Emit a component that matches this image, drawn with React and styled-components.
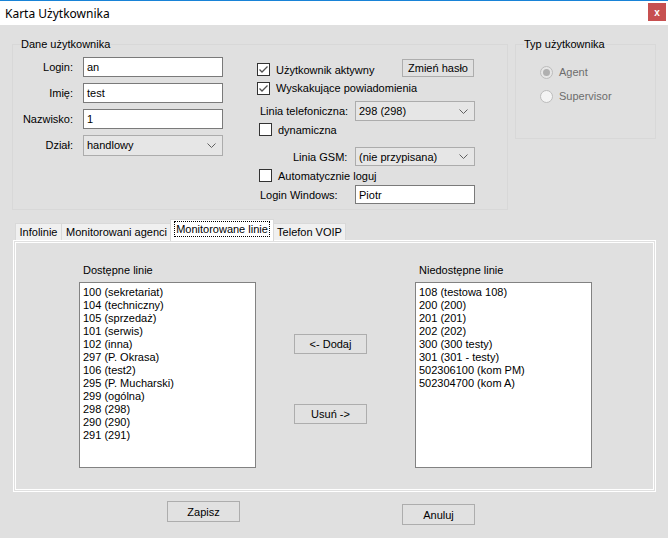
import React from "react";
import styled, { createGlobalStyle } from "styled-components";

const Global = createGlobalStyle`
  html, body {
    margin: 0;
    padding: 0;
    background: #e0e0e0;
  }
  * {
    box-sizing: border-box;
  }
`;

const Window = styled.div`
  width: 668px;
  height: 538px;
  background: #e0e0e0;
  display: flex;
  flex-direction: column;
  font-family: "Liberation Sans", Arial, sans-serif;
  font-size: 11px;
  color: #000;
  overflow: hidden;
`;

const TitleBar = styled.div`
  height: 25px;
  border-top: 1px solid #1883d7;
  background: #fff;
  display: flex;
  align-items: center;
  justify-content: space-between;
  padding-left: 5px;
  font-family: "Noto Sans", "Open Sans", sans-serif;
  font-size: 12px;
`;

const CloseBtn = styled.div`
  width: 18px;
  height: 18px;
  margin-right: 2px;
  align-self: flex-start;
  margin-top: 2px;
  background: #c75050;
  color: #fff;
  font-family: "Liberation Sans", Arial, sans-serif;
  font-weight: bold;
  font-size: 10px;
  display: flex;
  align-items: center;
  justify-content: center;
`;

const Body = styled.div`
  padding: 19px 0 0 12px;
  display: flex;
  flex-direction: column;
`;

const TopRow = styled.div`
  display: flex;
  align-items: flex-start;
  gap: 7px;
`;

const Group = styled.div`
  width: ${(p) => p.$w}px;
  height: ${(p) => p.$h}px;
  border: 1px solid #d8d8d8;
  display: flex;
  flex-direction: column;
`;

const Legend = styled.div`
  margin: -7px 0 0 8px;
  padding: 0 1px 0 0;
  background: #e0e0e0;
  line-height: 13px;
  width: fit-content;
`;

const GroupBody = styled.div`
  display: flex;
  padding-top: 6px;
`;

const LeftCol = styled.div`
  width: 210px;
  display: flex;
  flex-direction: column;
  gap: 6px;
`;

const FieldRow = styled.div`
  display: flex;
  align-items: center;
  gap: 10px;
  height: 20px;
`;

const FieldLabel = styled.span`
  width: 60px;
  text-align: right;
`;

const TextInput = styled.div`
  width: ${(p) => p.$w}px;
  height: ${(p) => p.$h || 20}px;
  background: #fff;
  border: 1px solid #7a7a7a;
  padding-left: 3px;
  display: flex;
  align-items: center;
`;

const Combo = styled.div`
  width: ${(p) => p.$w}px;
  height: ${(p) => p.$h || 20}px;
  background: #e6e6e6;
  border: 1px solid #acacac;
  padding: 0 6px 0 3px;
  display: flex;
  align-items: center;
  justify-content: space-between;
`;

const MidCol = styled.div`
  width: 218px;
  margin-left: 34px;
  margin-top: 1px;
  display: flex;
  flex-direction: column;
`;

const MidRow = styled.div`
  height: ${(p) => p.$h}px;
  margin-top: ${(p) => p.$mt || 0}px;
  display: flex;
  align-items: center;
  justify-content: space-between;
`;

const CheckLabel = styled.label`
  display: flex;
  align-items: center;
  gap: 6px;
  margin-left: ${(p) => p.$indent || 0}px;
  margin-top: ${(p) => p.$mt || 0}px;
`;

const Box = styled.span`
  width: 13px;
  height: 13px;
  border: 1px solid #333;
  background: #fff;
  display: flex;
  align-items: center;
  justify-content: center;
`;

const SideLabel = styled.span`
  width: 98px;
  padding-left: ${(p) => p.$indent}px;
  white-space: nowrap;
`;

const PlainRow = styled.div`
  display: flex;
  align-items: center;
`;

const Button = styled.div`
  width: ${(p) => p.$w}px;
  height: ${(p) => p.$h}px;
  margin: ${(p) => p.$m || "0"};
  background: #e1e1e1;
  border: 1px solid #adadad;
  display: flex;
  align-items: center;
  justify-content: center;
`;

const RadioList = styled.div`
  padding: 9px 0 0 24px;
  display: flex;
  flex-direction: column;
`;

const RadioRow = styled.div`
  height: 24px;
  display: flex;
  align-items: center;
  gap: 6px;
  color: #6d6d6d;
`;

const RadioCircle = styled.span`
  width: 13px;
  height: 13px;
  border-radius: 50%;
  border: 1px solid #bcbcbc;
  background: ${(p) => (p.$on ? "#e6e6e6" : "#f4f4f4")};
  display: flex;
  align-items: center;
  justify-content: center;
  &::after {
    content: "";
    width: 7px;
    height: 7px;
    border-radius: 50%;
    background: ${(p) => (p.$on ? "#b0b0b0" : "transparent")};
  }
`;

const TabStrip = styled.div`
  margin-top: 9px;
  height: 21px;
  padding-left: 3px;
  display: flex;
  align-items: flex-end;
`;

const Tab = styled.div`
  width: ${(p) => p.$w}px;
  height: ${(p) => (p.$active ? 22 : 17)}px;
  margin-right: -1px;
  margin-bottom: ${(p) => (p.$active ? -1 : 0)}px;
  margin-left: ${(p) => (p.$active ? -1 : 0)}px;
  background: ${(p) => (p.$active ? "#fff" : "#f0f0f0")};
  border: 1px solid #d9d9d9;
  border-bottom: none;
  display: flex;
  align-items: center;
  justify-content: center;
  padding-bottom: ${(p) => (p.$active ? 3 : 0)}px;
  position: relative;
  z-index: ${(p) => (p.$active ? 2 : 1)};
`;

const FocusText = styled.span`
  padding: 1px 1px;
  outline: 1px dotted #000;
`;

const Panel = styled.div`
  width: 643px;
  height: 252px;
  margin-left: 1px;
  border: 3px double #fff;
  background: #e0e0e0;
  display: flex;
  align-items: flex-start;
  padding: 21px 0 0 63px;
`;

const ListCol = styled.div`
  display: flex;
  flex-direction: column;
  margin-left: ${(p) => p.$ml || 0}px;
`;

const ListTitle = styled.div`
  line-height: 13px;
  padding-left: 4px;
  margin-bottom: 5px;
`;

const ListBox = styled.div`
  width: 177px;
  height: 186px;
  background: #fff;
  border: 1px solid #828282;
  padding: 3px 3px;
  line-height: 13px;
`;

const MoveCol = styled.div`
  margin: 70px 0 0 38px;
  display: flex;
  flex-direction: column;
  gap: 50px;
`;

const BottomRow = styled.div`
  display: flex;
  align-items: flex-start;
  margin-top: 9px;
`;

const Chevron = () => (
  <svg width="9" height="5" viewBox="0 0 9 5">
    <polyline points="0.5,0.5 4.5,4.5 8.5,0.5" fill="none" stroke="#606060" strokeWidth="1" />
  </svg>
);

const Check = ({ checked, label, indent, mt }) => (
  <CheckLabel $indent={indent} $mt={mt}>
    <Box>
      {checked && (
        <svg width="11" height="11" viewBox="0 0 11 11">
          <polyline points="1.5,5.5 4,8 9.5,2.5" fill="none" stroke="#505050" strokeWidth="1.3" />
        </svg>
      )}
    </Box>
    <span>{label}</span>
  </CheckLabel>
);

const available = [
  "100 (sekretariat)",
  "104 (techniczny)",
  "105 (sprzedaż)",
  "101 (serwis)",
  "102 (inna)",
  "297 (P. Okrasa)",
  "106 (test2)",
  "295 (P. Mucharski)",
  "299 (ogólna)",
  "298 (298)",
  "290 (290)",
  "291 (291)",
];

const unavailable = [
  "108 (testowa 108)",
  "200 (200)",
  "201 (201)",
  "202 (202)",
  "300 (300 testy)",
  "301 (301 - testy)",
  "502306100 (kom PM)",
  "502304700 (kom A)",
];

export default function App() {
  return (
    <>
      <Global />
      <Window>
        <TitleBar>
          <span>Karta Użytkownika</span>
          <CloseBtn>x</CloseBtn>
        </TitleBar>
        <Body>
          <TopRow>
            <Group $w={496} $h={166}>
              <Legend>Dane użytkownika</Legend>
              <GroupBody>
                <LeftCol>
                  <FieldRow>
                    <FieldLabel>Login:</FieldLabel>
                    <TextInput $w={140}>an</TextInput>
                  </FieldRow>
                  <FieldRow>
                    <FieldLabel>Imię:</FieldLabel>
                    <TextInput $w={140}>test</TextInput>
                  </FieldRow>
                  <FieldRow>
                    <FieldLabel>Nazwisko:</FieldLabel>
                    <TextInput $w={140}>1</TextInput>
                  </FieldRow>
                  <FieldRow>
                    <FieldLabel>Dział:</FieldLabel>
                    <Combo $w={140} $h={21}>
                      <span>handlowy</span>
                      <Chevron />
                    </Combo>
                  </FieldRow>
                </LeftCol>
                <MidCol>
                  <MidRow $h={20}>
                    <Check checked label="Użytkownik aktywny" mt={3} />
                    <Button $w={72} $h={18} $m="0 1px 0 0">
                      Zmień hasło
                    </Button>
                  </MidRow>
                  <MidRow $h={20}>
                    <Check checked label="Wyskakujące powiadomienia" />
                  </MidRow>
                  <MidRow $h={20} $mt={3}>
                    <PlainRow>
                      <SideLabel $indent={3}>Linia telefoniczna:</SideLabel>
                      <Combo $w={120}>
                        <span>298 (298)</span>
                        <Chevron />
                      </Combo>
                    </PlainRow>
                  </MidRow>
                  <MidRow $h={17}>
                    <Check label="dynamiczna" indent={2} />
                  </MidRow>
                  <MidRow $h={19} $mt={9}>
                    <PlainRow>
                      <SideLabel $indent={36}>Linia GSM:</SideLabel>
                      <Combo $w={120} $h={19}>
                        <span>(nie przypisana)</span>
                        <Chevron />
                      </Combo>
                    </PlainRow>
                  </MidRow>
                  <MidRow $h={19}>
                    <Check label="Automatycznie loguj" indent={2} />
                  </MidRow>
                  <MidRow $h={19}>
                    <PlainRow>
                      <SideLabel $indent={3}>Login Windows:</SideLabel>
                      <TextInput $w={120} $h={19}>
                        Piotr
                      </TextInput>
                    </PlainRow>
                  </MidRow>
                </MidCol>
              </GroupBody>
            </Group>
            <Group $w={141} $h={95}>
              <Legend>Typ użytkownika</Legend>
              <RadioList>
                <RadioRow>
                  <RadioCircle $on />
                  <span>Agent</span>
                </RadioRow>
                <RadioRow>
                  <RadioCircle />
                  <span>Supervisor</span>
                </RadioRow>
              </RadioList>
            </Group>
          </TopRow>

          <TabStrip>
            <Tab $w={47}>Infolinie</Tab>
            <Tab $w={111}>Monitorowani agenci</Tab>
            <Tab $w={104} $active>
              <FocusText>Monitorowane linie</FocusText>
            </Tab>
            <Tab $w={73}>Telefon VOIP</Tab>
          </TabStrip>
          <Panel>
            <ListCol>
              <ListTitle>Dostępne linie</ListTitle>
              <ListBox>
                {available.map((l) => (
                  <div key={l}>{l}</div>
                ))}
              </ListBox>
            </ListCol>
            <MoveCol>
              <Button $w={73} $h={20}>
                &lt;- Dodaj
              </Button>
              <Button $w={73} $h={20}>
                Usuń -&gt;
              </Button>
            </MoveCol>
            <ListCol $ml={48}>
              <ListTitle>Niedostępne linie</ListTitle>
              <ListBox>
                {unavailable.map((l) => (
                  <div key={l}>{l}</div>
                ))}
              </ListBox>
            </ListCol>
          </Panel>

          <BottomRow>
            <Button $w={73} $h={21} $m="0 0 0 155px">
              Zapisz
            </Button>
            <Button $w={73} $h={21} $m="3px 0 0 162px">
              Anuluj
            </Button>
          </BottomRow>
        </Body>
      </Window>
    </>
  );
}
